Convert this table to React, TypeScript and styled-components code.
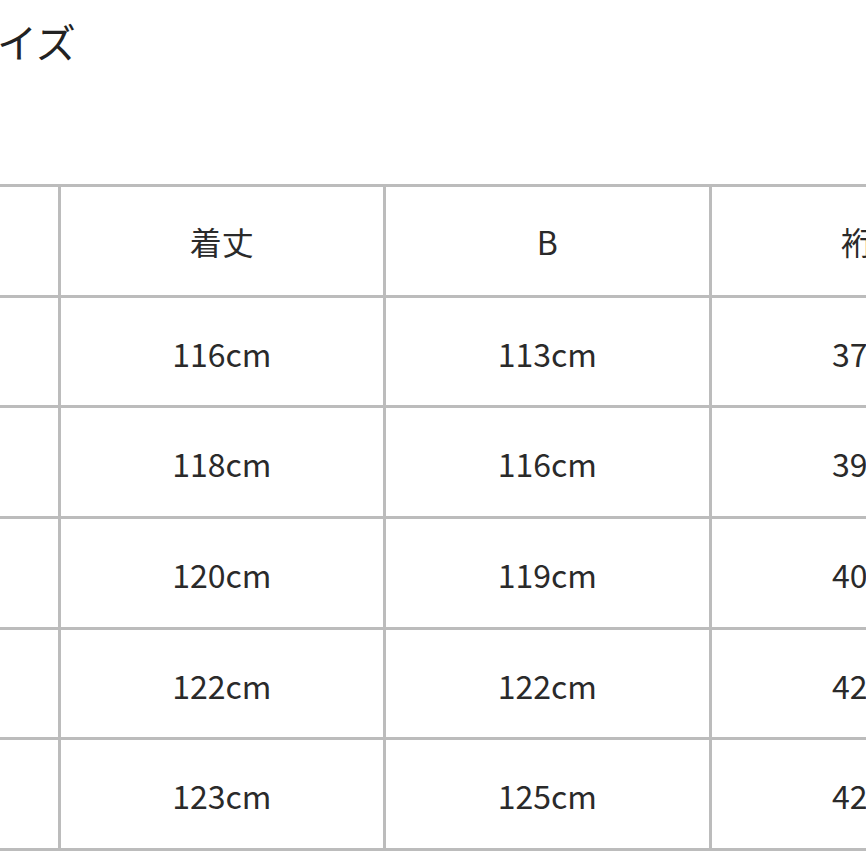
import React from 'react';
import styled, { createGlobalStyle } from 'styled-components';

const GlobalStyle = createGlobalStyle`
  html, body {
    margin: 0;
    padding: 0;
    background: #ffffff;
    overflow: hidden;
  }
  body {
    font-family: "Noto Sans CJK JP", "Noto Sans", sans-serif;
    color: #262626;
  }
`;

const Page = styled.div`
  width: 866px;
  height: 866px;
  overflow: hidden;
`;

const Title = styled.h2`
  margin: 21px 0 0 -43px;
  font-size: 40px;
  line-height: 40px;
  font-weight: 400;
  color: #222;
  white-space: nowrap;
`;

const SizeTable = styled.div`
  display: grid;
  grid-template-columns: repeat(4, 325.5px);
  grid-auto-rows: 110.7px;
  width: max-content;
  margin: 123px 0 0 -268px;
  border-top: 3px solid #bcbcbc;
  border-left: 3px solid #bcbcbc;
`;

const Cell = styled.div<{ $head?: boolean }>`
  box-sizing: border-box;
  display: flex;
  align-items: center;
  justify-content: center;
  border-right: 3px solid #bcbcbc;
  border-bottom: 3px solid #bcbcbc;
  font-size: 32px;
  font-weight: 400;
  color: #2a2a2a;
  padding-top: ${(p) => (p.$head ? '0' : '2px')};
`;

const headers = ['サイズ', '着丈', 'B', '裄丈'];

const rows = [
  ['S', '116cm', '113cm', '37cm'],
  ['M', '118cm', '116cm', '39cm'],
  ['L', '120cm', '119cm', '40cm'],
  ['XL', '122cm', '122cm', '42cm'],
  ['XXL', '123cm', '125cm', '42cm'],
];

export default function App() {
  return (
    <Page>
      <GlobalStyle />
      <Title>サイズ</Title>
      <SizeTable role="table">
        {headers.map((h) => (
          <Cell key={h} $head role="columnheader">
            {h}
          </Cell>
        ))}
        {rows.map((r) =>
          r.map((v, i) => (
            <Cell key={r[0] + i} role="cell">
              {v}
            </Cell>
          ))
        )}
      </SizeTable>
    </Page>
  );
}
